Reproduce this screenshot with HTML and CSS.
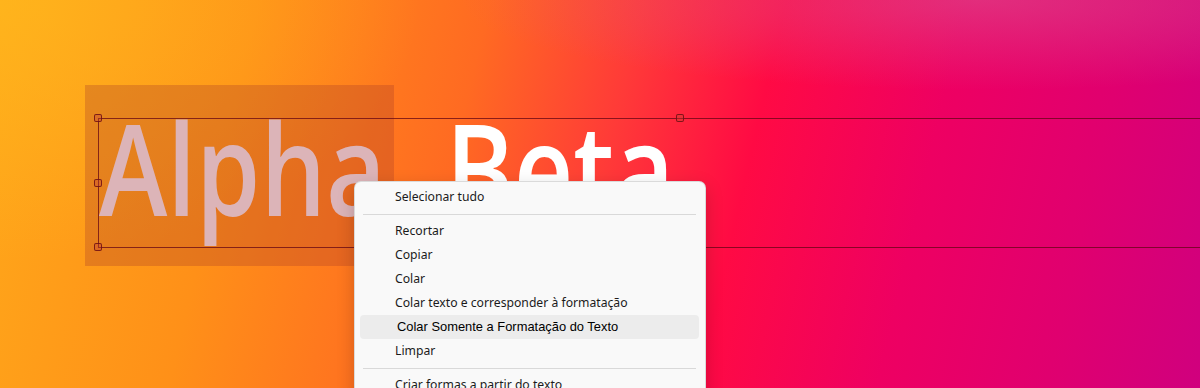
FILE: index.html
```html
<!DOCTYPE html>
<html lang="pt">
<head>
  <meta charset="UTF-8" />
  <meta name="viewport" content="width=device-width, initial-scale=1.0"/>
  <title>Alpha Beta</title>
  <link rel="stylesheet" href="styles.css">
</head>
<body>
  <div class="slide">
    <div class="pick"></div>
    <div class="textbox">
      <p class="words"><span class="sel">Alpha</span> <span class="plain">Beta</span></p>
      <i class="handle h-tl"></i>
      <i class="handle h-ml"></i>
      <i class="handle h-bl"></i>
      <i class="handle h-tm"></i>
    </div>

    <ul class="menu">
      <li>Selecionar tudo</li>
      <li class="sep"></li>
      <li>Recortar</li>
      <li>Copiar</li>
      <li>Colar</li>
      <li>Colar texto e corresponder à formatação</li>
      <li class="hover">Colar Somente a Formatação do Texto</li>
      <li>Limpar</li>
      <li class="sep"></li>
      <li>Criar formas a partir do texto</li>
    </ul>
  </div>
</body>
</html>
```

FILE: styles.css
```css
* {
  box-sizing: border-box;
}
body {
  margin: 0;
  width: 1200px;
  height: 388px;
  overflow: hidden;
  font-family: "Noto Sans", "Open Sans", sans-serif;
}
.slide {
  position: relative;
  width: 1200px;
  height: 388px;
  overflow: hidden;
  background:
    radial-gradient(ellipse 520px 90px at 980px 0px, rgba(215, 90, 150, 0.5), rgba(215, 90, 150, 0)),
    radial-gradient(ellipse 420px 260px at 0px 0px, rgba(255, 190, 30, 0.55), rgba(255, 190, 30, 0)),
    linear-gradient(103deg, #ffa81a 0%, #ff9018 20%, #ff6a22 38%, #ff3a38 50%, #ff0a44 61%, #ee0062 75%, #e0006f 88%, #d0007e 100%);
}

/* selected word highlight */
.pick {
  position: absolute;
  left: 85px;
  top: 85px;
  width: 309px;
  height: 181px;
  background: rgba(170, 60, 40, 0.3);
}

.textbox {
  position: absolute;
  left: 98px;
  top: 118px;
  width: 1200px;
  height: 130px;
  border: 1px solid rgba(100, 5, 20, 0.75);
  border-right: none;
}
.words {
  margin: -15px 0 0 0;
  font-family: "Open Sans", "Noto Sans", sans-serif;
  font-size: 126px;
  font-weight: 600;
  line-height: 126px;
  white-space: nowrap;
  word-spacing: 40px;
  transform: scaleX(0.82);
  transform-origin: 0 0;
}
.sel {
  color: #dcb4b8;
}
.plain {
  color: #fff;
}

.handle {
  position: absolute;
  width: 8px;
  height: 8px;
  border: 1px solid rgba(110, 15, 20, 0.85);
  background: rgba(200, 70, 50, 0.35);
  border-radius: 2px;
}
.h-tl { left: -5px; top: -5px; }
.h-ml { left: -5px; top: 60px; }
.h-bl { left: -5px; top: 124px; }
.h-tm { left: 577px; top: -5px; }

/* context menu */
.menu {
  position: absolute;
  left: 354px;
  top: 181px;
  width: 352px;
  margin: 0;
  padding: 3px 0;
  list-style: none;
  background: #f9f9f9;
  border: 1px solid rgba(0, 0, 0, 0.12);
  border-radius: 7px;
  box-shadow: 0 6px 18px rgba(0, 0, 0, 0.18);
  font-family: "Noto Sans", "Open Sans", sans-serif;
  font-size: 12.2px;
  color: #1b1b1b;
}
.menu li {
  height: 24px;
  line-height: 24px;
  margin: 0 6px 0 5px;
  padding-left: 35px;
  border-radius: 4px;
  white-space: nowrap;
}
.menu li.sep {
  height: 1px;
  margin: 5px 9px 4px 8px;
  padding: 0;
  background: #d9d9d9;
  border-radius: 0;
}
.menu li.hover {
  background: #ececec;
  padding-left: 37px;
  font-family: "Liberation Sans", Arial, sans-serif;
  font-size: 12.9px;
  color: #000;
}
```
